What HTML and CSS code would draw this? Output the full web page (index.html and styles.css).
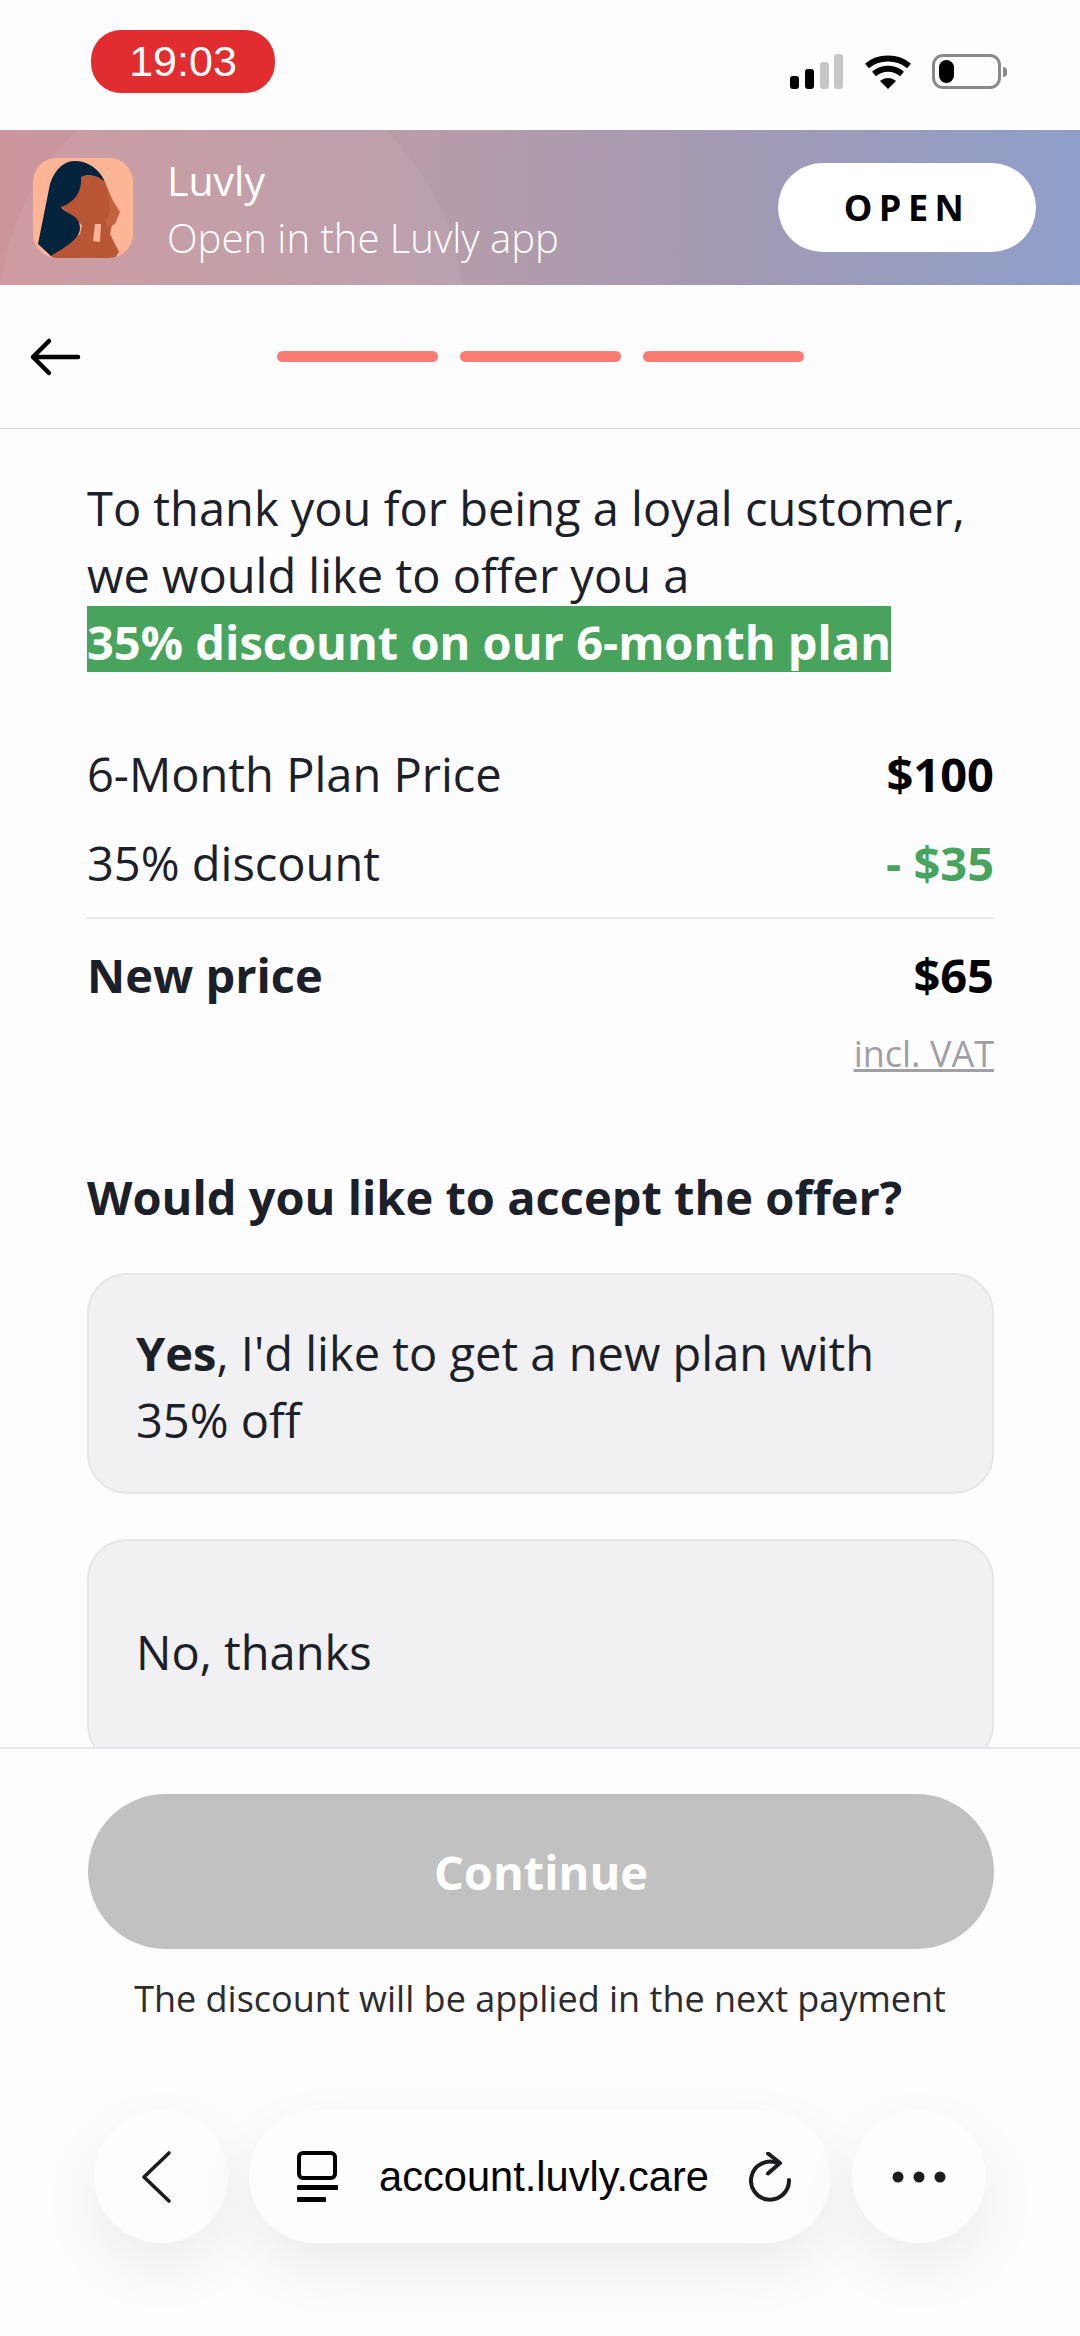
FILE: index.html
```html
<!DOCTYPE html>
<html lang="en">
<head>
    <meta charset="UTF-8">
    <meta name="viewport" content="width=device-width, initial-scale=1.0">
    <title>Luvly</title>
    <link rel="stylesheet" href="styles.css">
</head>
<body>
<div class="page">
    <div class="status-bar">
        <div class="time-pill">19:03</div>
        <div class="status-icons">
            <svg width="53" height="35" viewBox="0 0 53 35">
                <rect x="0" y="22" width="9" height="13" rx="3" fill="#000"/>
                <rect x="15" y="15" width="9" height="20" rx="3" fill="#000"/>
                <rect x="30" y="8" width="9" height="27" rx="3" fill="#c6c6c6"/>
                <rect x="44" y="0" width="9" height="35" rx="3" fill="#c6c6c6"/>
            </svg>
            <svg width="46" height="35" viewBox="0 0 46 35">
                <path d="M2 12 C13 2 33 2 44 12" fill="none" stroke="#000" stroke-width="6"/>
                <path d="M9 20 C17 13 29 13 37 20" fill="none" stroke="#000" stroke-width="6"/>
                <path d="M15 27 C20 23 26 23 31 27 L23 35 Z" fill="#000"/>
            </svg>
            <div class="battery">
                <div class="battery-level"></div>
            </div>
            <div class="battery-cap"></div>
        </div>
    </div>

    <div class="app-banner">
        <div class="app-banner-glow"></div>
        <svg class="app-icon" width="100" height="100" viewBox="0 0 100 100">
            <defs>
                <clipPath id="icon-clip"><rect width="100" height="100" rx="24"/></clipPath>
            </defs>
            <g clip-path="url(#icon-clip)">
                <rect width="100" height="100" fill="#fdb596"/>
                <path d="M20 100 L18 98 L47 76 L50 62 L80 62 L77 76 L86 94 L82 100 Z" fill="#b95636"/>
                <path d="M72 24 L80 43 L87 54 L82 66 L74 70 L70 40 Z" fill="#c4623f"/>
                <path d="M48 19 C54 16 66 16 72 24 C75 34 76 42 77 52 C76 60 72 64 66 66 L50 68 L28 49 C38 44 46 36 48 19 Z" fill="#b95636"/>
                <path d="M62 66 L68 66 L67 84 L60 83 Z" fill="#fdb596"/>
                <path d="M5 86 L17 26 C22 10 32 3 42 3 C54 3 66 10 72 24 C66 18 56 15 48 19 C49 34 42 44 28 49 C32 56 47 56 47 70 C47 82 30 90 18 98 Z" fill="#04243d"/>
            </g>
        </svg>
        <div class="app-info">
            <div class="app-name">Luvly</div>
            <div class="app-sub">Open in the Luvly app</div>
        </div>
        <button class="open-btn">OPEN</button>
    </div>

    <div class="top-nav">
        <svg class="nav-arrow" width="52" height="40" viewBox="0 0 52 40">
            <path d="M49 20 H4 M20 4 L4 20 L20 36" fill="none" stroke="#000" stroke-width="4.5" stroke-linecap="round" stroke-linejoin="round"/>
        </svg>
        <div class="progress">
            <span class="progress-step"></span>
            <span class="progress-step"></span>
            <span class="progress-step"></span>
        </div>
    </div>

    <main class="content">
        <p class="intro">To thank you for being a loyal customer,<br>we would like to offer you a<br><span class="highlight">35% discount on our 6-month plan</span></p>

        <div class="price-row">
            <span>6-Month Plan Price</span>
            <strong class="price">$100</strong>
        </div>
        <div class="price-row discount-row">
            <span>35% discount</span>
            <strong class="price green">- $35</strong>
        </div>
        <div class="price-row total-row">
            <strong>New price</strong>
            <strong class="price">$65</strong>
        </div>
        <div class="vat"><u>incl. VAT</u></div>

        <h2 class="question">Would you like to accept the offer?</h2>

        <div class="option option-yes"><span><b>Yes</b>, I'd like to get a new plan with 35% off</span></div>
        <div class="option option-no"><span>No, thanks</span></div>
    </main>

    <div class="footer">
        <button class="continue-btn">Continue</button>
        <p class="note">The discount will be applied in the next payment</p>
        <div class="browser-bar">
            <div class="round-btn">
                <svg class="back-icon" width="32" height="54" viewBox="0 0 32 54">
                    <path d="M29 3 L4 27 L29 51" fill="none" stroke="#1c1c1e" stroke-width="3.6" stroke-linecap="round" stroke-linejoin="round"/>
                </svg>
            </div>
            <div class="url-pill">
                <svg class="tabs-icon" width="44" height="52" viewBox="0 0 44 52">
                    <rect x="4" y="2" width="36" height="25" rx="4" fill="none" stroke="#000" stroke-width="4"/>
                    <rect x="2" y="34" width="41" height="5" rx="1" fill="#000"/>
                    <rect x="2" y="46" width="29" height="5" rx="1" fill="#000"/>
                </svg>
                <span class="url">account.luvly.care</span>
                <svg class="reload-icon" width="42" height="50" viewBox="0 0 42 50">
                    <path d="M28 11 A19 19 0 1 0 40 28" fill="none" stroke="#1c1c1e" stroke-width="4" stroke-linecap="round"/>
                    <path d="M19 1.5 L31 11 L19 21.5" fill="none" stroke="#1c1c1e" stroke-width="4" stroke-linecap="round" stroke-linejoin="round"/>
                </svg>
            </div>
            <div class="round-btn">
                <svg width="56" height="14" viewBox="0 0 56 14">
                    <circle cx="7" cy="7" r="5.5" fill="#1c1c1e"/>
                    <circle cx="28" cy="7" r="5.5" fill="#1c1c1e"/>
                    <circle cx="49" cy="7" r="5.5" fill="#1c1c1e"/>
                </svg>
            </div>
        </div>
    </div>
</div>
</body>
</html>
```

FILE: styles.css
```css
* {
    box-sizing: border-box;
}
body {
    margin: 0;
    font-family: "Open Sans", sans-serif;
    color: #1c2028;
    background-color: #fdfdff;
}
.page {
    width: 1080px;
    height: 2336px;
    display: flex;
    flex-direction: column;
    overflow: hidden;
}
.status-bar {
    height: 130px;
    flex-shrink: 0;
    display: flex;
    justify-content: space-between;
    padding: 30px 73px 0 91px;
}
.time-pill {
    width: 184px;
    height: 63px;
    border-radius: 30px;
    background-color: #e22d30;
    color: #fff;
    font-family: "Liberation Sans", sans-serif;
    font-size: 43px;
    line-height: 63px;
    text-align: center;
}
.status-icons {
    display: flex;
    align-items: center;
    height: 35px;
    margin-top: 24px;
}
.status-icons svg:first-child {
    margin-right: 22px;
}
.status-icons svg:nth-child(2) {
    margin-right: 21px;
}
.battery {
    width: 69px;
    height: 35px;
    border: 3px solid #8a8a8a;
    border-radius: 11px;
    padding: 3px 4px;
}
.battery-level {
    width: 15px;
    height: 23px;
    background-color: #000;
    border-radius: 8px;
}
.battery-cap {
    width: 4px;
    height: 10px;
    margin-left: 2px;
    background-color: #8a8a8a;
    border-radius: 0 5px 5px 0;
}
.app-banner {
    position: relative;
    height: 155px;
    flex-shrink: 0;
    display: flex;
    align-items: center;
    padding: 0 44px 0 33px;
    overflow: hidden;
    background: linear-gradient(90deg, #cc959c 0%, #b79ca9 40%, #a19ab5 70%, #8f9fca 100%);
}
.app-banner-glow {
    position: absolute;
    left: -4px;
    top: -66px;
    width: 470px;
    height: 532px;
    border-radius: 50%;
    background-color: rgba(255, 255, 255, 0.06);
}
.app-icon {
    position: relative;
    flex-shrink: 0;
}
.app-info {
    position: relative;
    flex: 1;
    margin-left: 34px;
    color: #fff;
}
.app-name {
    font-size: 41px;
    font-weight: 500;
    line-height: 54px;
    margin-bottom: 4px;
    padding-top: 2px;
}
.app-sub {
    font-size: 40px;
    font-weight: 300;
    line-height: 54px;
}
.open-btn {
    position: relative;
    width: 258px;
    height: 89px;
    border: none;
    border-radius: 45px;
    background-color: #fff;
    color: #000;
    font-family: "Open Sans", sans-serif;
    font-size: 36px;
    font-weight: 700;
    letter-spacing: 6.5px;
}
.top-nav {
    position: relative;
    height: 144px;
    flex-shrink: 0;
    display: flex;
    justify-content: center;
    align-items: center;
    border-bottom: 1px solid #d2d2d4;
}
.nav-arrow {
    position: absolute;
    left: 29px;
    top: 52px;
}
.progress {
    display: flex;
    gap: 22px;
}
.progress-step {
    width: 161px;
    height: 11px;
    border-radius: 6px;
    background-color: #fc7b73;
}
.content {
    flex: 1;
    min-height: 0;
    overflow: hidden;
    padding: 46px 86px 0 87px;
}
.intro {
    margin: 0 0 68px;
    font-size: 47px;
    line-height: 67px;
}
.highlight {
    display: inline-block;
    margin-top: -3px;
    padding-top: 6px;
    line-height: 60px;
    background-color: #48a45c;
    color: #fff;
    font-weight: 700;
}
.price-row {
    display: flex;
    justify-content: space-between;
    align-items: center;
    font-size: 47px;
    line-height: 60px;
}
.price {
    font-weight: 700;
    color: #000;
}
.green {
    color: #48a45c;
}
.discount-row {
    margin-top: 29px;
    padding-bottom: 24px;
    border-bottom: 2px solid #e8e8ea;
}
.total-row {
    margin-top: 26px;
}
.vat {
    margin-top: 27px;
    text-align: right;
    font-size: 36px;
    line-height: 44px;
    color: #a0a0a4;
}
.question {
    margin: 91px 0 46px;
    font-size: 47px;
    font-weight: 700;
    line-height: 60px;
}
.option {
    display: flex;
    align-items: center;
    padding: 0 47px;
    border: 2px solid #e6e6e8;
    border-radius: 40px;
    background-color: #f1f1f3;
    font-size: 47px;
    line-height: 67px;
    flex-shrink: 0;
}
.option-yes {
    height: 221px;
    margin-bottom: 45px;
    padding-top: 6px;
}
.option-no {
    height: 226px;
}
.footer {
    flex-shrink: 0;
    height: 589px;
    padding-top: 45px;
    border-top: 2px solid #e8e8ea;
    background-color: #fdfdfe;
}
.continue-btn {
    display: block;
    width: 906px;
    height: 155px;
    margin: 0 0 0 88px;
    border: none;
    border-radius: 78px;
    background-color: #c1c1c1;
    color: #fff;
    font-family: "Open Sans", sans-serif;
    font-size: 47px;
    font-weight: 700;
}
.note {
    margin: 26px 0 0;
    text-align: center;
    font-size: 36px;
    line-height: 48px;
    color: #2c2c30;
}
.browser-bar {
    display: flex;
    justify-content: center;
    gap: 21px;
    margin-top: 87px;
}
.round-btn,
.url-pill {
    height: 133px;
    display: flex;
    align-items: center;
    background-color: #fdfdfd;
    box-shadow: 0 24px 60px rgba(0, 0, 0, 0.07);
}
.round-btn {
    width: 134px;
    justify-content: center;
    border-radius: 50%;
}
.back-icon {
    margin-right: 10px;
}
.url-pill {
    width: 582px;
    padding: 0 40px 0 46px;
    border-radius: 67px;
    justify-content: space-between;
}
.url {
    font-family: "Liberation Sans", sans-serif;
    font-size: 41.6px;
    color: #000;
}
```
